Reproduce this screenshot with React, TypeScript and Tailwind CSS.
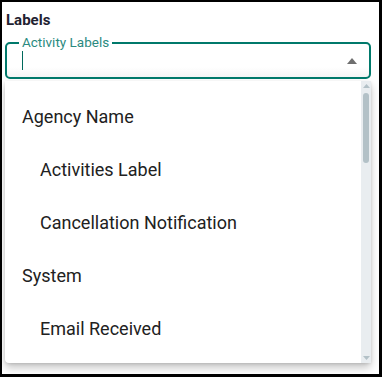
import React from "react";

type Option = { label: string; group?: boolean };

const options: Option[] = [
  { label: "Agency Name", group: true },
  { label: "Activities Label" },
  { label: "Cancellation Notification" },
  { label: "System", group: true },
  { label: "Email Received" },
];

export default function App() {
  return (
    <div
      className="relative h-[377px] w-[382px] overflow-hidden border-b-[3px] border-l-2 border-r-[3px] border-t-2 border-black bg-white"
      style={{ fontFamily: "Roboto, 'Liberation Sans', sans-serif" }}
    >
      <div className="pl-1 pt-[10px]">
        <p className="text-[15px] font-bold leading-[17px] text-[#1f2230]">Labels</p>
      </div>

      {/* outlined input */}
      <div className="relative ml-[3px] mt-[13px] flex h-[37px] w-[366px] items-center justify-between rounded-[5px] border-2 border-[#00796b] bg-gradient-to-b from-white from-70% to-[#f4f4f4] pl-[15px] pr-[12px]">
        <span className="absolute -top-[9px] left-[12px] bg-white px-[3px] text-[13.5px] leading-[14px] text-[#2b8a7f]">
          Activity Labels
        </span>
        <span className="h-[19px] w-px bg-[#00695c]" />
        <svg width="10" height="6" viewBox="0 0 10 6">
          <path d="M0 6 L5 0 L10 6 Z" fill="#6f6f6f" />
        </svg>
      </div>

      {/* dropdown popup */}
      <div className="absolute left-[3px] top-[79px] h-[282px] w-[366px] rounded-b-[4px] bg-white shadow-[0_5px_8px_rgba(0,0,0,0.22),0_1px_3px_rgba(0,0,0,0.12)]">
        <ul className="pr-[10px] pt-[9px]">
          {options.map((option) => (
            <li
              key={option.label}
              className={`flex h-[53px] items-center text-[18px] text-[#212121] ${
                option.group ? "pl-[17px]" : "pl-[35px]"
              }`}
            >
              {option.label}
            </li>
          ))}
        </ul>

        {/* scrollbar */}
        <div className="absolute bottom-0 right-0 top-0 flex w-[10px] flex-col items-center bg-[#e9edf0]">
          <svg className="mt-[3px]" width="7" height="4" viewBox="0 0 7 4">
            <path d="M0 4 L3.5 0 L7 4 Z" fill="#b3c1c7" />
          </svg>
          <div className="mt-[5px] h-[70px] w-[6px] rounded-full bg-[#b3c1c7]" />
          <div className="flex-1" />
          <svg className="mb-[3px]" width="7" height="4" viewBox="0 0 7 4">
            <path d="M0 0 L7 0 L3.5 4 Z" fill="#b3c1c7" />
          </svg>
        </div>
      </div>
    </div>
  );
}
